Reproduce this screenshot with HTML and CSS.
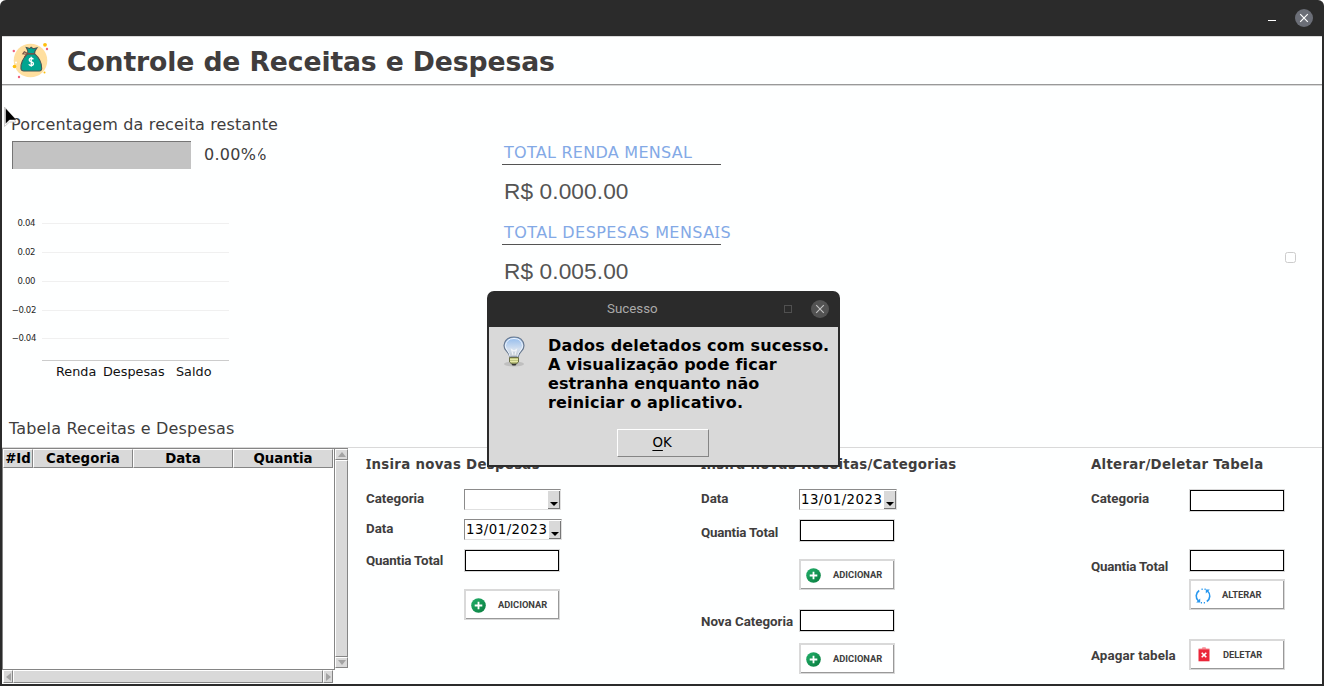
FILE: index.html
```html
<!DOCTYPE html>
<html lang="pt-BR">
<head>
<meta charset="utf-8">
<title>Controle de Receitas e Despesas</title>
<link rel="stylesheet" href="styles.css">
</head>
<body>
<svg class="defs" width="0" height="0">
  <defs>
    <linearGradient id="green" x1="0" y1="0" x2="1" y2="1"><stop offset="0" stop-color="#23b06b"/><stop offset="1" stop-color="#087b3d"/></linearGradient>
    <symbol id="plus" viewBox="0 0 15 15"><circle cx="7.5" cy="7.5" r="7.3" fill="url(#green)"/><path d="M7.5 3.7v7.6M3.7 7.5h7.6" stroke="#fff" stroke-width="1.8"/></symbol>
  </defs>
</svg>
<div class="window">
  <div class="titlebar">
    <span class="minimize"></span>
    <svg class="close" width="18" height="18" viewBox="0 0 18 18"><circle cx="9" cy="9" r="9" fill="#6b6e77"/><path d="M5.2 5.2l7.6 7.6M12.8 5.2l-7.6 7.6" stroke="#fff" stroke-width="1.2"/></svg>
  </div>
  <div class="content">
    <header class="header">
      <svg class="logo" width="38" height="38" viewBox="0 0 38 38">
        <circle cx="19.500" cy="18.500" r="16.800" fill="#ffdf9f"/>
        <circle cx="34" cy="2.800" r="1.900" fill="#fdbf0d"/><circle cx="3.500" cy="24.500" r="1.800" fill="#fdbf0d"/><circle cx="33.500" cy="30.500" r="1" fill="#fdbf0d"/>
        <circle cx="2.800" cy="9" r="1.200" fill="#f0617b"/><circle cx="36" cy="7" r="1.200" fill="#f0617b"/><circle cx="8" cy="35" r="1.200" fill="#f0617b"/>
        <circle cx="5" cy="20.500" r="1" fill="#fff"/>
        <g transform="translate(1.700 -.400) scale(.97)">
          <path d="M15.500 12.500C11 17 8 23 8.500 28q.4 2.300 3 2.300h16q2.200 0 2.400-2.600C30 22 27 16.500 22.500 12.500z" fill="#00a590" stroke="#455" stroke-width="1.100"/>
          <path d="M15.500 12.500q.5-3.500-1.500-6.500 2 .4 3.500 1.200L19 5.800l2 1.500 4-.8q-2.500 3-2.500 6z" fill="#00a590" stroke="#455" stroke-width="1.100"/>
          <path d="M15.500 12.200q4 1 7 0M15 12l-3-1.500-1.500 2 4 .5-2.500 3" fill="none" stroke="#795548" stroke-width="1.200"/>
          <path d="M21.300 18.200q-.8-1.200-2.400-1-2 .2-1.900 1.800.1 1.300 2.100 1.800 2.300.5 2.300 2 0 1.700-2.300 1.800-1.800 0-2.500-1.300M19.100 15.500v10.500" fill="none" stroke="#fff" stroke-width="1.400"/>
        </g>
      </svg>
      <h1>Controle de Receitas e Despesas</h1>
    </header>

    <main class="overview">
      <section class="left">
        <p class="caption remaining">Porcentagem da receita restante</p>
        <div class="progress"><div class="track"></div><span class="percent">0.00%</span><span class="percent-rest"><span>%</span></span></div>
        <div class="chart">
          <div class="plot">
            <div class="tick"><span>0.04</span><i></i></div>
            <div class="tick"><span>0.02</span><i></i></div>
            <div class="tick"><span>0.00</span><i></i></div>
            <div class="tick neg"><span>−0.02</span><i></i></div>
            <div class="tick neg"><span>−0.04</span><i></i></div>
          </div>
          <div class="axis"><span>Renda</span><span>Despesas</span><span>Saldo</span></div>
        </div>
        <p class="caption table-title">Tabela Receitas e Despesas</p>
      </section>
      <section class="totals">
        <h2>TOTAL RENDA MENSAL</h2>
        <p>R$ 0.000.00</p>
        <h2 class="wide">TOTAL DESPESAS MENSA<span class="slab">I</span>S</h2>
        <p>R$ 0.005.00</p>
      </section>
      <section class="right"><span class="check"></span></section>
    </main>

    <div class="bottom">
      <section class="table">
        <div class="grid-area">
          <div class="sheet">
            <div class="head"><span>#Id</span><span>Categoria</span><span>Data</span><span>Quantia</span></div>
          </div>
          <div class="hscroll">
            <span class="arrow"><svg width="5" height="8"><path d="M5 0v8L0 4z"/></svg></span><span class="thumb"></span><span class="arrow"><svg width="5" height="8"><path d="M0 0v8l5-4z"/></svg></span>
          </div>
        </div>
        <div class="vscroll">
          <span class="arrow"><svg width="8" height="5"><path d="M0 5h8L4 0z"/></svg></span><span class="thumb"></span><span class="arrow"><svg width="8" height="5"><path d="M0 0h8L4 5z"/></svg></span>
        </div>
      </section>

      <section class="panel expenses">
        <h3><span class="slab">I</span>nsira novas Despesas</h3>
        <div class="row r1"><label>Categoria</label><div class="combo empty"><span></span><b></b></div></div>
        <div class="row r2"><label>Data</label><div class="combo"><span>13/01/2023</span><b></b></div></div>
        <div class="row r3"><label class="tight">Quantia Total</label><div class="field"></div></div>
        <div class="row r4"><label></label><button><svg width="15" height="15"><use href="#plus"/></svg><span>ADICIONAR</span></button></div>
      </section>

      <section class="panel incomes">
        <h3><span class="slab">I</span>nsira novas Receitas/Categorias</h3>
        <div class="row r1"><label>Data</label><div class="combo"><span>13/01/2023</span><b></b></div></div>
        <div class="row r2"><label class="tight">Quantia Total</label><div class="field"></div></div>
        <div class="row r3"><label></label><button><svg width="15" height="15"><use href="#plus"/></svg><span>ADICIONAR</span></button></div>
        <div class="row r4"><label>Nova Categoria</label><div class="field"></div></div>
        <div class="row r5"><label></label><button><svg width="15" height="15"><use href="#plus"/></svg><span>ADICIONAR</span></button></div>
      </section>

      <section class="panel edit">
        <h3>Alterar/Deletar Tabela</h3>
        <div class="row r1"><label>Categoria</label><div class="field"></div></div>
        <div class="row r2"><label class="tight">Quantia Total</label><div class="field"></div></div>
        <div class="row r3"><label></label><button class="alter"><svg width="16" height="16" viewBox="0 0 16 16" fill="none" stroke="#2797ef" stroke-width="1.600"><path d="M3.500 13A6.600 6.600 0 0 1 4.200 2.500M12.500 3A6.600 6.600 0 0 1 11.800 13.500"/><path d="M6.500 1.200h1.200M9.500 1.300h1.200M5.800 14.700h1.200M8.800 14.800h1.200" /><path d="M10.800 5.500V1.500h4zM5.200 10.500v4h-4z" fill="#2797ef" stroke="none"/></svg><span>ALTERAR</span></button></div>
        <div class="row r4"><label class="loose">Apagar tabela</label><button class="delete"><svg width="12" height="15" viewBox="0 0 12 15"><path d="M.5 2.500V1.400h3.300L4.500.3h3l.7 1.100h3.300v1.100z" fill="#f78b94"/><path d="M.5 2.300h11v12H.5z" fill="#eb2639"/><path d="M3.700 5.700l4.600 4.600M8.300 5.700l-4.600 4.600" stroke="#fff" stroke-width="1.600"/></svg><span>DELETAR</span></button></div>
      </section>
    </div>
  </div>
</div>

<div class="dialog">
  <div class="dialog-bar"><span class="dialog-title">Sucesso</span><span class="maximize"></span>
    <svg width="18" height="18" viewBox="0 0 18 18"><circle cx="9" cy="9" r="9" fill="#535353"/><path d="M5.200 5.200l7.600 7.600M12.800 5.200l-7.600 7.600" stroke="#c4c4c4" stroke-width="1.100"/></svg></div>
  <div class="dialog-body">
    <svg class="bulb" width="22" height="32" viewBox="0 0 22 32">
      <defs><linearGradient id="glass" x1="0" y1="0" x2="0" y2="1"><stop offset="0" stop-color="#8fb9ec"/><stop offset=".6" stop-color="#d3e0f0"/><stop offset="1" stop-color="#c3c8ce"/></linearGradient></defs>
      <ellipse cx="11" cy="28" rx="10" ry="2.500" fill="#aaa" opacity=".55"/>
      <path d="M7 21Q6.500 18 3.500 15 1 12.500 1 9.500 2 1 11 1t10 8.500q0 3-2.500 5.500-3 3-3.500 6z" fill="url(#glass)" stroke="#687990" stroke-width="1.200"/>
      <path d="M7 20.500Q6.500 17 4 14 2.500 12 2.500 9.500 3.500 2.500 11 2.500t8.500 7q0 2.500-1.500 4.500-3 3-3.500 6.500" fill="none" stroke="#eef5ff"/>
      <path d="M10 19L8.500 13.500l2.500 1.500 2.500-1.500L12 19" fill="none" stroke="#f1f4f8" stroke-width="1.100"/>
      <path d="M6.500 21.500h9v4.500q-1 2-4.500 2t-4.500-2z" fill="#b7bd77" stroke="#6a6e47"/><path d="M7 23.300h8M7 25.300h8" stroke="#f1f3b3"/><path d="M8.500 28h5l-1 1.500h-3z" fill="#333"/>
    </svg>
    <p>Dados deletados com sucesso.<br>A visualização pode ficar<br><span class="snug">estranha enquanto não</span><br>reiniciar o aplicativo.</p>
    <div class="ok"><span><u>O</u>K</span></div>
  </div>
</div>

<svg class="cursor" width="14" height="22" viewBox="0 0 14 22"><path d="M.5 1v19.500l5-4.500h6.500z" fill="#fff" stroke="#ccc"/><path d="M1.500 2v16l4-4h7z" fill="#000" stroke="#fff" stroke-width=".4"/></svg>
</body>
</html>
```
FILE: styles.css
```css
* { box-sizing: border-box; margin: 0; padding: 0; }
body { width: 1324px; height: 686px; overflow: hidden; background: #fff; color: #403d3d; font-family: Verdana, "DejaVu Sans", sans-serif; }
.defs { position: absolute; }
svg { display: block; flex: none; }
.window { height: 686px; display: flex; flex-direction: column; background: #2b2b2b; border-radius: 6px 6px 0 0; }
.titlebar { height: 36px; display: flex; align-items: center; justify-content: flex-end; padding-right: 11px; gap: 19px; }
.minimize { width: 8px; height: 1px; background: #fff; margin-top: 4px; }
.content { flex: 1; margin: 0 2px 2px; background: #feffff; border-top: 1px solid #d9d9d9; display: flex; flex-direction: column; overflow: hidden; }
.header { height: 49px; display: flex; align-items: flex-start; border-bottom: 1px solid #d9d9d9; box-shadow: inset 0 -1px #999; padding: 5px 0 0 9px; }
h1 { font-size: 26.67px; line-height: 32px; margin: 4px 0 0 18px; letter-spacing: -.13px; white-space: nowrap; }

.overview { height: 362px; display: flex; border-bottom: 1px solid #d9d9d9; }
.left { width: 500px; }
.caption { font-size: 16px; line-height: 20px; letter-spacing: .14px; white-space: nowrap; }
.remaining { margin: 29px 0 0 9px; }
.progress { display: flex; margin: 6px 0 0 10px; font-size: 16px; line-height: 20px; height: 29px; }
.track { width: 179px; height: 28px; background: #c3c3c3; border: solid #757575; border-width: 1px 0 0 1px; }
.percent { margin: 4px 0 0 13px; letter-spacing: .3px; }
.percent-rest { width: 8px; height: 20px; margin: 4px 0 0 2px; overflow: hidden; display: flex; justify-content: flex-end; }
.chart { margin: 47px 0 0 8px; width: 220px; }
.plot { height: 143px; display: flex; flex-direction: column; }
.tick { flex: none; height: 29px; display: flex; align-items: flex-start; font: 8.5px/12px "DejaVu Sans", sans-serif; letter-spacing: -.35px; color: #262626; }
.tick span { width: 25px; text-align: right; }
.tick.neg span { width: 26px; }
.tick i { flex: none; width: 187px; height: 1px; margin: 6px 0 0 7px; background: #f0f0f0; }
.tick.neg i { margin-left: 6px; }
.tick:last-child { height: 27px; margin-top: -1px; }
.axis { margin-left: 32px; width: 187px; border-top: 1px solid #ccc; padding: 3px 0 0 14px; display: flex; font: 12.8px/16px "DejaVu Sans", sans-serif; color: #111; white-space: nowrap; }
.axis span:nth-child(1) { width: 47px; }
.axis span:nth-child(2) { width: 73px; }
.table-title { margin: 39px 0 0 7px; letter-spacing: .17px; }
.totals { width: 240px; padding-top: 57px; }
.totals h2 { width: 219px; height: 22px; border-bottom: 1px solid #545454; padding-left: 2px; color: #83a9e6; font-size: 16px; line-height: 20px; font-weight: 400; letter-spacing: .27px; white-space: nowrap; }
.totals h2.wide { letter-spacing: .42px; }
.totals p { height: 58px; padding: 12px 0 0 2px; font: 22.67px/28px "Liberation Sans", Arial, sans-serif; letter-spacing: .1px; color: #545454; }
.slab { font-family: "Noto Sans", sans-serif; line-height: 0; }
.right { flex: 1; display: flex; justify-content: flex-end; padding: 166px 26px 0 0; }
.check { width: 11px; height: 11px; border: 1px solid #ccc; border-radius: 2.500px; }

.bottom { flex: 1; display: flex; min-height: 0; }
.table { width: 346px; display: flex; }
.grid-area { width: 333px; display: flex; flex-direction: column; }
.sheet { height: 222px; background: #fff; border: 1px solid #858585; }
.head { display: grid; grid-template-columns: 30px 100px 100px 100px; height: 19px; }
.head span { background: #d9d9d9; border: 1px solid #858585; border-top-color: #fff; border-left-color: #fff; color: #000; font: bold 13.33px/17px "DejaVu Sans", sans-serif; text-align: center; white-space: nowrap; }
.head span:nth-child(2) { letter-spacing: .1px; }
.hscroll { height: 13px; display: grid; grid-template-columns: 10px 1fr 10px; padding: 0 2px 0 1px; }
.vscroll { width: 13px; height: 220px; display: grid; grid-template-rows: 11px 1fr 11px; border-top: 1px solid #858585; }
.arrow, .thumb { background: #d9d9d9; border: 1px solid #858585; border-top-color: #fff; border-left-color: #fff; display: flex; align-items: center; justify-content: center; }
.arrow svg { fill: #a3a3a3; }

.panel { padding-top: 7px; }
.expenses { width: 335px; padding-left: 18px; }
.incomes { width: 390px; padding-left: 18px; }
.edit { padding-left: 18px; }
h3 { font-size: 13.33px; line-height: 18px; height: 34px; padding-top: 1px; letter-spacing: .29px; white-space: nowrap; }
.row { display: flex; align-items: flex-start; }
label { width: 98px; font: bold 13.33px/18px Roboto, sans-serif; white-space: nowrap; margin-top: 1px; }
.tight { letter-spacing: -.16px; }
.loose { letter-spacing: .12px; }
.field { width: 96px; height: 23px; background: #fff; border: 1px solid #d9d9d9; box-shadow: inset 0 0 0 1px #000; }
.combo { width: 98px; height: 21px; display: flex; border: 1px solid #e0e0e0; border-top-color: #8b8b8b; border-left-color: #8b8b8b; color: #000; font: 13.33px/19px Verdana, "DejaVu Sans", sans-serif; background: #fff; }
.combo.empty { width: 97px; }
.combo span { flex: 1; min-width: 0; padding-left: 1px; letter-spacing: .45px; white-space: nowrap; }
.combo b { flex: none; width: 12px; height: 18px; margin-top: 1px; background: #d9d9d9; border: 1px solid #777; border-width: 0 1px 1px 0; display: flex; align-items: flex-end; justify-content: center; padding-bottom: 2px; }
.combo b::after { content: ""; border: solid transparent; border-width: 4px 4px 0; border-top-color: #000; }
button { width: 96px; height: 31px; display: flex; border: solid #d9d9d9; border-width: 2px 1px 1px 2px; box-shadow: inset -1px -1px #999; background: #fff; color: #403d3d; font: bold 9.33px/13px Roboto, sans-serif; padding: 7px 0 0 5px; white-space: nowrap; }
button span { margin-left: 12px; }
button.alter { padding-left: 4px; }
.alter span { margin-left: 11px; }
button.delete { padding-left: 7px; padding-top: 6px; }
.delete span { margin: 1px 0 0 13px; }
.expenses .r2 { margin-top: 9px; }
.expenses .r3 { margin-top: 9px; }
.expenses .r3 label { margin-top: 3px; }
.expenses .r4 { margin-top: 17px; }
.incomes .r2 { margin-top: 9px; }
.incomes .r2 label { margin-top: 5px; }
.incomes .r3 { margin-top: 17px; }
.incomes .r4 { margin-top: 19px; }
.incomes .r4 label { margin-top: 4px; }
.incomes .r5 { margin-top: 11px; }
.edit .r2 { margin-top: 37px; height: 23px; }
.edit .r2 label { margin-top: 9px; }
.edit .r3 { margin-top: 7px; }
.edit .r4 { margin-top: 29px; }
.edit .r4 label { margin-top: 8px; }

.dialog { position: absolute; left: 487px; top: 291px; width: 353px; height: 176px; background: #2b2b2b; border-radius: 7px 7px 0 0; padding: 0 2px 2px; display: flex; flex-direction: column; }
.dialog-bar { height: 36px; display: flex; align-items: center; padding-right: 9px; }
.dialog-title { margin-left: 118px; width: 177px; color: #aaa; font: 13.33px/18px Roboto, sans-serif; }
.maximize { width: 8px; height: 8px; border: 1px solid #505050; margin-right: auto; }
.dialog-body { flex: 1; background: #d9d9d9; display: grid; grid-template-columns: 59px 1fr; grid-template-rows: 102px 28px; color: #000; }
.bulb { margin: 9px 0 0 14px; }
.dialog p { padding-top: 9px; font: bold 16px/19px "DejaVu Sans", sans-serif; letter-spacing: .18px; white-space: nowrap; }
.snug { letter-spacing: .04px; }
.ok { grid-column: 1 / 3; width: 92px; margin-left: 128px; border: 1px solid #858585; border-top-color: #fff; border-left-color: #fff; font: 13.33px/18px "DejaVu Sans", sans-serif; text-align: center; padding: 4px 2px 0 0; }
.ok u { text-underline-offset: 3px; }
.cursor { position: absolute; left: 4px; top: 106px; }
```
